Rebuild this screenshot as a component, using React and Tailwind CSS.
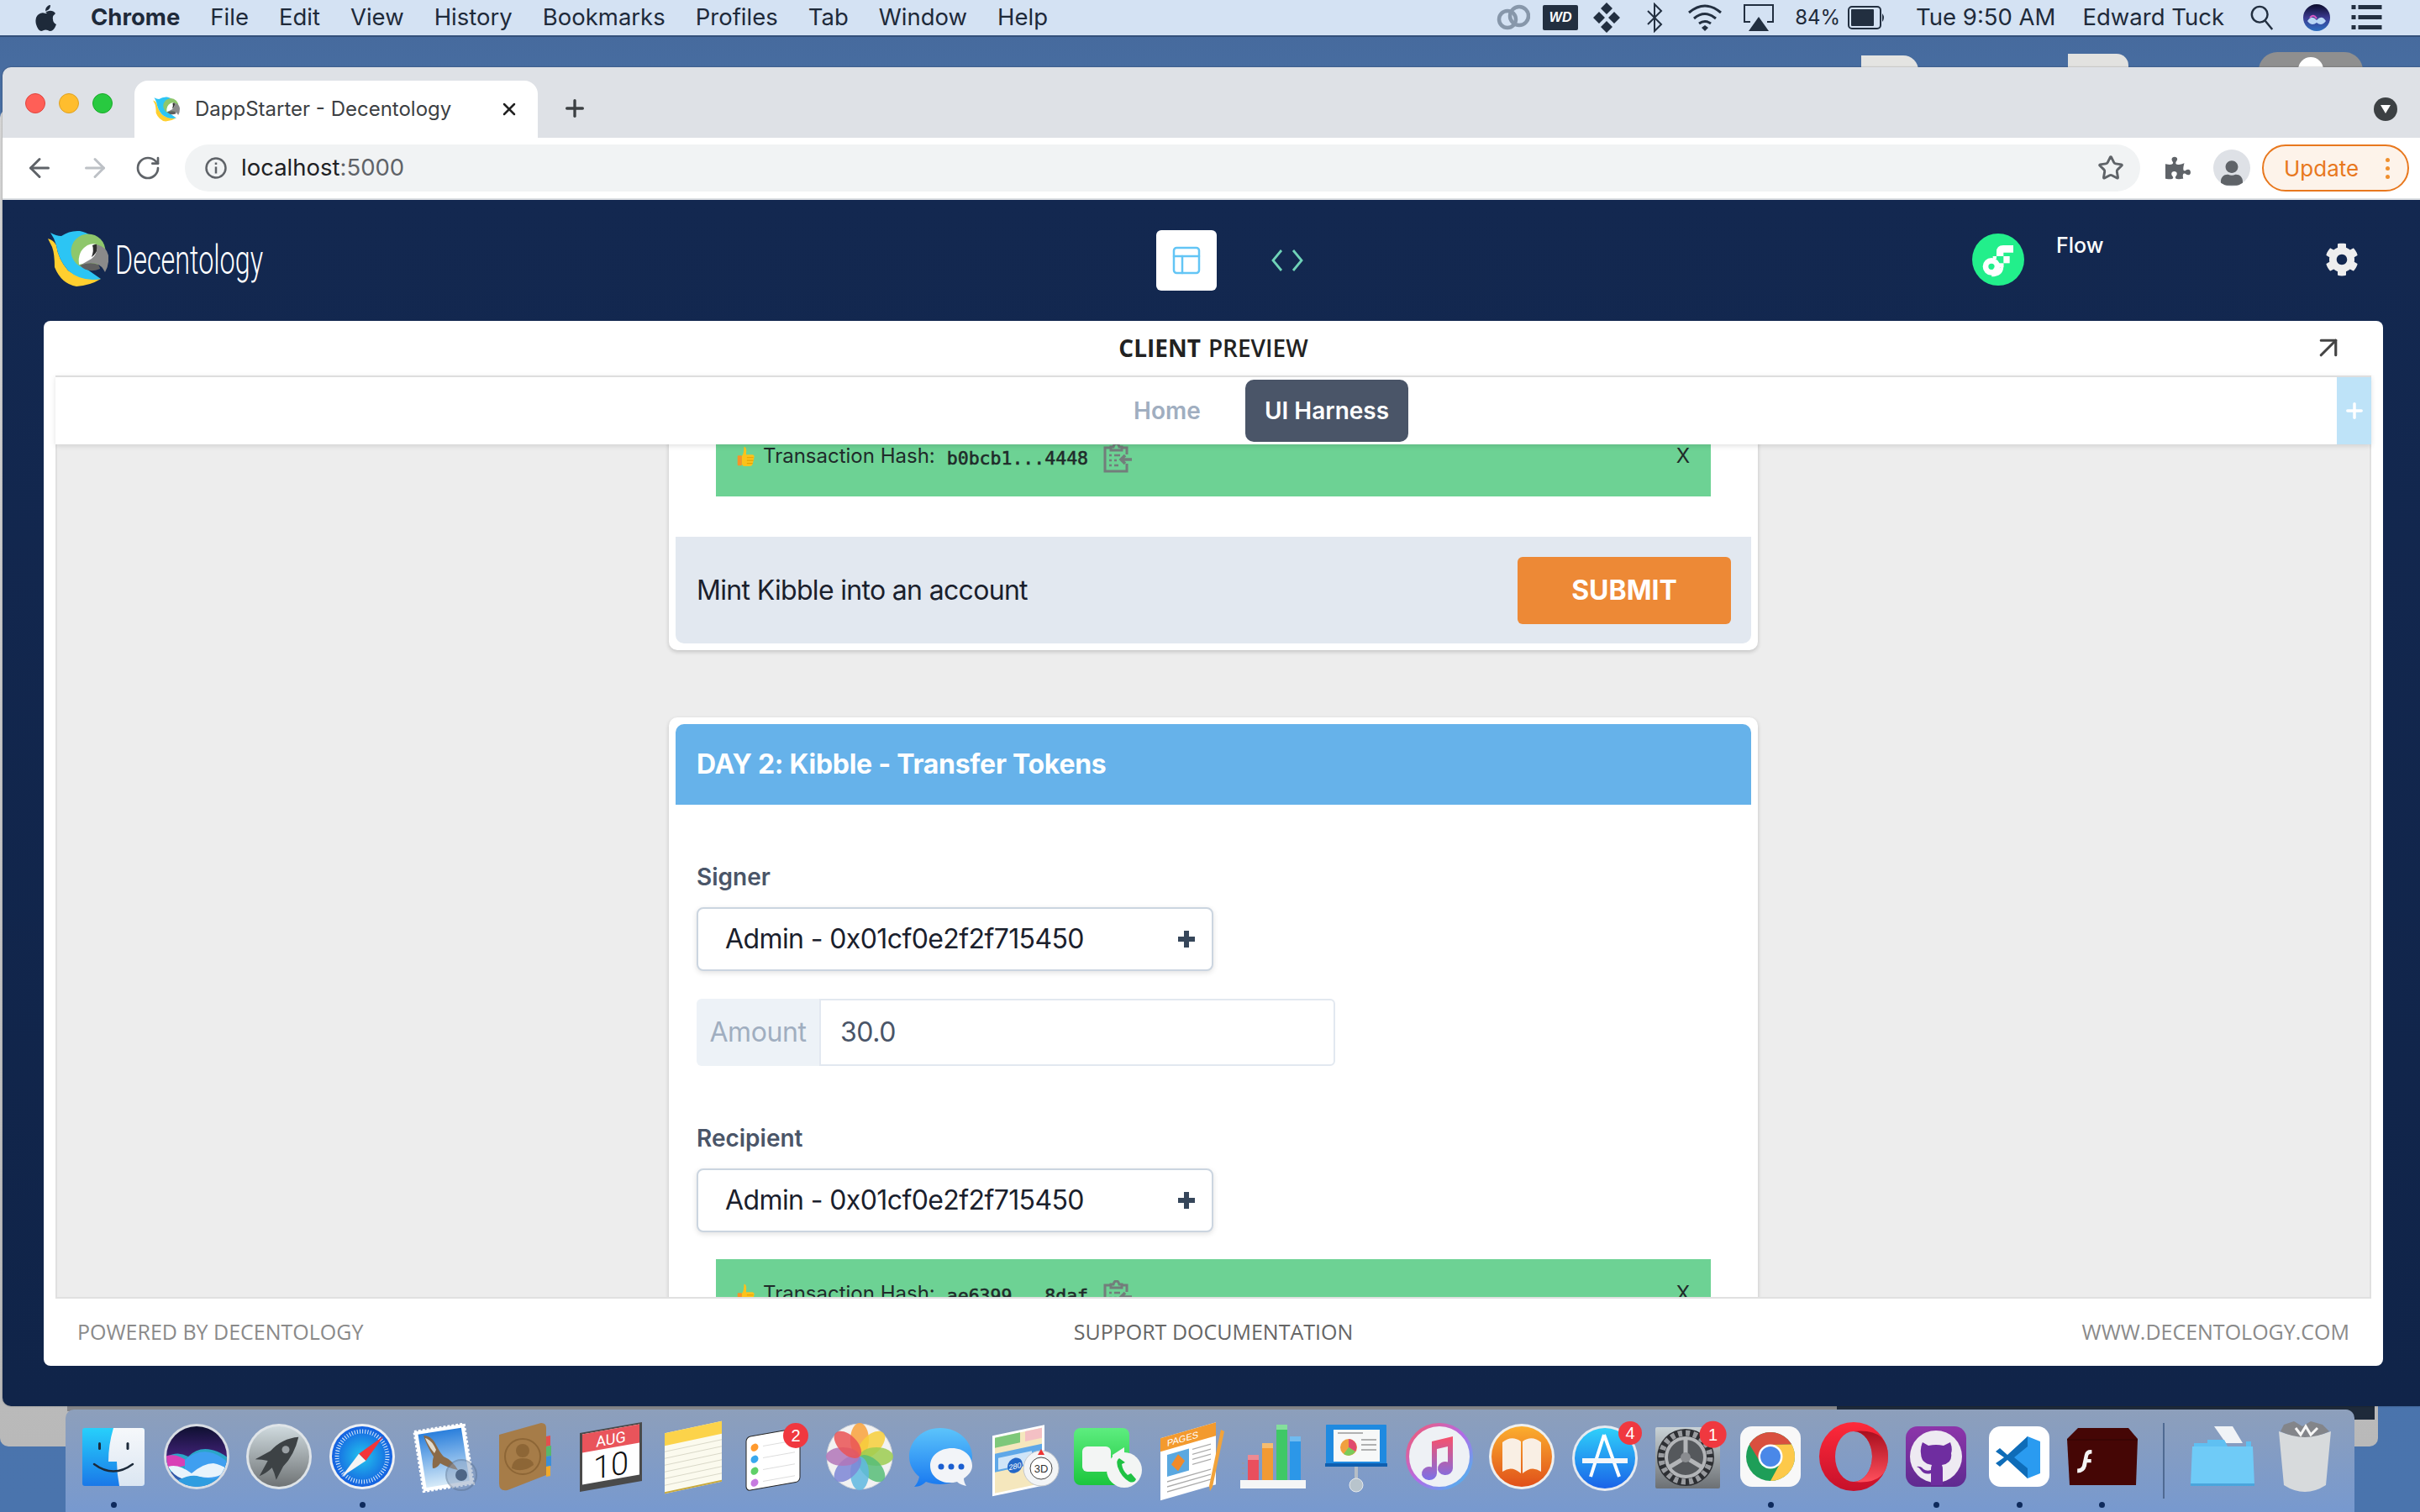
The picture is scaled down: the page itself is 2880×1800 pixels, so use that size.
import React from "react";
import { ArrowLeft, ArrowRight, RotateCw, Star, PanelsTopLeft, ArrowUpRight, Plus, X } from "lucide-react";
import { FaCog, FaPuzzlePiece, FaUser } from "react-icons/fa";

const Parrot = ({ className }) => (
  <svg viewBox="0 0 72 68" className={className}>
    <path d="M0 10 Q7 12 10 18 Q12 34 24 48 Q40 60 63 58 Q50 66 34 67 Q16 64 8 44 Q8 28 5 20 Z" fill="#ffcf2f" />
    <path d="M3 3 Q10 7 16 7 Q26 0 38 1 Q54 4 60 20 L40 42 L63 58 Q40 62 24 48 Q12 34 10 18 Q8 10 3 3 Z" fill="#2cc5f4" />
    <circle cx="48" cy="25" r="20.500" fill="#8ec76b" />
    <path d="M37 41 Q35 25 47 18 Q53 15 58 17 L62 30 L52 38 Z" fill="#fff" />
    <path d="M53 18 Q58 16 58 17 Q60 22 57 27 Q54 31 52 32 Q55 24 53 18 Z" fill="#2d2d2d" />
    <path d="M58 17 Q70 20 72 30 Q73 42 68 50 Q64 42 58 40 Q48 38 38 42 L52 34 Q60 28 58 17 Z" fill="#8a8a8a" />
    <path d="M38 42 Q50 37 60 41 Q62 44 62 46 Q48 52 38 42 Z" fill="#5f5f5f" />
  </svg>
);

const Menu = ({ children, bold }) => <span className={bold ? "font-bold" : ""}>{children}</span>;

const MenuIcons = {
  cc: (
    <svg viewBox="0 0 40 32" className="w-[40px] h-[32px]" fill="none" stroke="#8797aa" strokeWidth="4.500">
      <circle cx="13" cy="18" r="10" />
      <circle cx="27" cy="14" r="11" />
    </svg>
  ),
  wd: (
    <div className="w-[42px] h-[30px] rounded-[2px] bg-[#222f40] text-white text-[16px] font-black italic flex items-center justify-center font-['Liberation_Sans',sans-serif]">WD</div>
  ),
  drop: (
    <svg viewBox="0 0 32 36" className="w-[32px] h-[36px]" fill="#222f40">
      <path d="M16 0l7 7-7 7-7-7zM7 11l7 7-7 7-7-7zM25 11l7 7-7 7-7-7zM16 22l7 7-7 7-7-7z" />
    </svg>
  ),
  bt: (
    <svg viewBox="0 0 20 36" className="w-[20px] h-[36px]" fill="none" stroke="#222f40" strokeWidth="2">
      <path d="M2 10l16 16-8 8V2l8 8L2 26" />
    </svg>
  ),
  wifi: (
    <svg viewBox="0 0 42 34" className="w-[42px] h-[34px]" fill="none" stroke="#222f40" strokeWidth="3">
      <path d="M2 11Q21-5 40 11M8 18Q21 7 34 18M14 24Q21 19 28 24" />
      <path d="M17 29l4-3 4 3-4 4z" fill="#222f40" stroke="none" />
    </svg>
  ),
  air: (
    <svg viewBox="0 0 38 34" className="w-[38px] h-[34px]" fill="none" stroke="#222f40" strokeWidth="2">
      <path d="M9 22H2V2h34v20h-7" />
      <path d="M19 16l12 17H7z" fill="#222f40" stroke="none" />
    </svg>
  ),
  batt: (
    <svg viewBox="0 0 46 28" className="w-[46px] h-[28px]">
      <rect x="1" y="1" width="38" height="26" rx="4" fill="none" stroke="#222f40" strokeWidth="2" />
      <rect x="4" y="4" width="27" height="20" rx="1" fill="#222f40" />
      <path d="M41 9q4 5 0 10z" fill="#222f40" />
    </svg>
  ),
  search: (
    <svg viewBox="0 0 32 36" className="w-[30px] h-[36px]" fill="none" stroke="#222f40" strokeWidth="2.600">
      <circle cx="13" cy="14" r="10" />
      <path d="M20 22l9 11" />
    </svg>
  ),
  siri: (
    <svg viewBox="0 0 32 32" className="w-[32px] h-[32px]">
      <defs>
        <linearGradient id="ms" x1="0" y1="0" x2="0" y2="1">
          <stop offset="0" stopColor="#0a0a2a" />
          <stop offset=".5" stopColor="#3b3a90" />
          <stop offset="1" stopColor="#2d6fc0" />
        </linearGradient>
      </defs>
      <circle cx="16" cy="16" r="16" fill="url(#ms)" />
      <path d="M5 20q5-8 11-1 6-7 11 1-5 7-11 2-6 5-11-2z" fill="#b9d6f5" />
      <path d="M8 16q4-5 8 1" stroke="#d85ac4" strokeWidth="2" fill="none" />
    </svg>
  ),
  list: (
    <svg viewBox="0 0 36 32" className="w-[37px] h-[32px]" fill="#222f40">
      <path d="M0 1h5v5H0zM8 1h28v5H8zM0 13h5v5H0zM8 13h28v5H8zM0 25h5v5H0zM8 25h28v5H8z" />
    </svg>
  ),
};

const HashIcon = () => (
  <svg viewBox="0 0 34 36" className="w-[34px] h-[36px] ml-[18px] shrink-0" fill="none" stroke="#737d7b" strokeWidth="3">
    <path d="M8 6H2v28h26V25" />
    <path d="M22 6h6v8" />
    <path d="M9 9V5h3q1-4 3.500-4T19 5h3v4z" />
    <path d="M7 15h3M13 15h7M7 21h3M13 21h3M7 27h3M13 27h5" strokeWidth="2.500" />
    <path d="M34 20H21m5-5l-5 5 5 5" strokeWidth="3.500" />
  </svg>
);

const Thumb = () => (
  <svg viewBox="0 0 24 28" className="w-[22px] h-[24px] mt-[4px] shrink-0">
    <path d="M9 1q4 0 3 8l0 3h9q3 1 2 4l-2 9q-1 3-4 3H9q-3-1-3-5v-9q3-3 3-13z" fill="#fcc21b" />
    <rect x="0" y="13" width="6" height="14" rx="1" fill="#f79329" />
    <path d="M13 16h9M13 20h9M13 24h8" stroke="#e6a100" strokeWidth="1.300" />
  </svg>
);

const Hash = ({ mono }) => (
  <div className="h-[89px] mx-[48px] bg-[#6dd294] flex items-start pt-[25px] pl-[25px] pr-[24px] text-[24px] leading-[32px] text-[#1f2b2a]">
    <Thumb />
    <span className="ml-[9px]">Transaction Hash:</span>
    <span className="ml-[14px] mt-[3px] font-['DejaVu_Sans_Mono',monospace] text-[21.500px] [-webkit-text-stroke:0.6px_#1f2b2a]">{mono}</span>
    <HashIcon />
    <span className="ml-auto pr-[1px]">X</span>
  </div>
);

const SelectBox = ({ className = "" }) => (
  <div className={`w-[615px] h-[76px] rounded-[8px] bg-white border-2 border-[#cbd5e0] shadow-[0_2px_6px_rgba(0,0,0,0.12)] flex items-center pl-[32px] pr-[20px] text-[32px] tracking-[-0.6px] text-[#1a202c] ${className}`}>
    <span>Admin - 0x01cf0e2f2f715450</span>
    <svg viewBox="0 0 20 20" className="w-[20px] h-[20px] ml-auto" fill="#36465a">
      <path d="M7 0h6v7h7v6h-7v7H7v-7H0V7h7z" />
    </svg>
  </div>
);

const Label = ({ children, className = "" }) => (
  <div className={`text-[28px] leading-[40px] font-semibold text-[#4a5568] ${className}`}>{children}</div>
);

const D = ({ children }) => <svg viewBox="0 0 84 84" className="w-[84px] h-[84px] overflow-visible">{children}</svg>;

const icons = [
  // finder
  <D>
    <defs>
      <linearGradient id="f1" x1="0" y1="0" x2="0" y2="1"><stop offset="0" stopColor="#27d0fb" /><stop offset="1" stopColor="#1a78e8" /></linearGradient>
      <linearGradient id="f2" x1="0" y1="0" x2="0" y2="1"><stop offset="0" stopColor="#f6f8fb" /><stop offset="1" stopColor="#dbe6f2" /></linearGradient>
    </defs>
    <rect x="5" y="8" width="74" height="69" rx="3" fill="url(#f1)" />
    <path d="M42 8Q36 28 36 48H46Q46 62 49 77H76a3 3 0 003-3V11a3 3 0 00-3-3z" fill="url(#f2)" />
    <rect x="24" y="25" width="3" height="9" rx="1.500" fill="#1c2a3a" />
    <rect x="57.500" y="25" width="3" height="9" rx="1.500" fill="#1c2a3a" />
    <path d="M19 51Q42 68 65 51" fill="none" stroke="#1c2a3a" strokeWidth="2.500" strokeLinecap="round" />
  </D>,
  // siri
  <D>
    <defs>
      <linearGradient id="s1" x1="0" y1="0" x2="0" y2="1"><stop offset="0" stopColor="#0e1030" /><stop offset=".45" stopColor="#3a1f6e" /><stop offset="1" stopColor="#2b76c8" /></linearGradient>
      <clipPath id="s2"><circle cx="42" cy="42" r="36" /></clipPath>
    </defs>
    <circle cx="42" cy="42" r="39" fill="#d8dde4" />
    <circle cx="42" cy="42" r="36" fill="url(#s1)" />
    <g clipPath="url(#s2)">
      <path d="M4 44Q18 34 32 42Q44 30 60 34Q70 36 80 44V60H4Z" fill="#2aa6c8" />
      <path d="M4 42Q18 36 34 50Q24 56 4 56Z" fill="#d93fb6" />
      <path d="M28 46Q44 32 62 38Q72 42 80 50V70H28Z" fill="#3f9ff0" />
      <path d="M8 54Q20 50 36 62Q50 50 62 50Q72 52 80 58Q66 70 46 66Q36 74 24 68Q14 64 8 54Z" fill="#e8f4fc" />
      <path d="M20 70Q36 62 46 66Q60 72 70 66V84H20Z" fill="#2f9de0" />
    </g>
  </D>,
  // launchpad
  <D>
    <defs><linearGradient id="l1" x1="0" y1="0" x2="0" y2="1"><stop offset="0" stopColor="#cfdade" /><stop offset="1" stopColor="#6f7375" /></linearGradient></defs>
    <circle cx="42" cy="42" r="39" fill="#dfe4e8" />
    <circle cx="42" cy="42" r="36" fill="url(#l1)" />
    <path d="M65.300 18.700Q45.300 20.300 32 35.300L13.700 45.300Q22 45.300 28.700 47L18.700 65.300Q27 62 33.700 55.300Q37 62 38.700 69.700L47 53.700Q60.300 40.300 65.300 18.700Z" fill="#3d4245" />
    <circle cx="50" cy="33.700" r="4.500" fill="#9aa0a4" />
  </D>,
  // safari
  <D>
    <defs><radialGradient id="sa"><stop offset="0" stopColor="#22c4ee" /><stop offset="1" stopColor="#1560e0" /></radialGradient></defs>
    <circle cx="42" cy="42" r="39" fill="#eef0f3" />
    <circle cx="42" cy="42" r="36" fill="url(#sa)" />
    <circle cx="42" cy="42" r="30" fill="none" stroke="#fff" strokeWidth="5" strokeDasharray="1 2.140" opacity=".85" />
    <path d="M67.300 17.700L46.300 47 38 38.700z" fill="#f2353a" />
    <path d="M17.300 66.300L38 38.700 46.300 47z" fill="#f4f4f4" />
  </D>,
  // mail
  <D>
    <defs><linearGradient id="m1" x1="0" y1="0" x2="0" y2="1"><stop offset="0" stopColor="#2a7fdc" /><stop offset="1" stopColor="#d6eaf8" /></linearGradient></defs>
    <g transform="rotate(-9 42 42)">
      <rect x="10" y="7" width="60" height="72" fill="#fff" stroke="#fff" strokeWidth="3" strokeDasharray="3 2" />
      <rect x="14" y="11" width="52" height="64" fill="url(#m1)" />
    </g>
    <path d="M16 17Q26 17 32 30Q36 38 40 42Q50 46 57 58Q44 55 36 50Q32 56 27 56Q26 48 28 42Q20 30 16 17Z" fill="#8a6a48" />
    <path d="M18 20Q26 22 31 34L29 38Q22 30 18 20Z" fill="#e2dccf" />
    <circle cx="61" cy="64" r="18" fill="#8aa0bf" opacity=".5" stroke="#5f7592" strokeWidth="2" />
    <circle cx="61" cy="64" r="7" fill="#4e6686" />
  </D>,
  // contacts
  <D>
    <path d="M8 16L58 2Q64 2 64 8V64L18 82Q8 84 8 74Z" fill="#a67c48" />
    <path d="M64 18l5-1v12l-5 1z" fill="#e24f4f" /><path d="M64 30l6-1v12l-6 1z" fill="#57b86b" /><path d="M64 42l6-1v12l-6 1z" fill="#3b8fd8" /><path d="M64 54l5-1v12l-5 1z" fill="#f0a92a" />
    <circle cx="36" cy="42" r="21" fill="none" stroke="#8d6636" strokeWidth="2" />
    <circle cx="36" cy="35" r="8" fill="#8d6636" />
    <path d="M23 56Q24 44 36 44Q48 44 49 52Q36 62 23 56Z" fill="#8d6636" />
  </D>,
  // calendar
  <D>
    <g transform="skewY(-10) translate(0 8)">
      <rect x="5" y="7" width="74" height="70" fill="#4a4a4a" />
      <rect x="8" y="9" width="68" height="60" fill="#fff" />
      <rect x="8" y="9" width="68" height="22" fill="#e9545b" />
      <text x="42" y="27" textAnchor="middle" fontSize="18" fill="#fff" fontFamily="Roboto, sans-serif">AUG</text>
      <text x="42" y="65" textAnchor="middle" fontSize="38" fill="#111" fontFamily="Roboto, sans-serif" fontWeight="300">10</text>
    </g>
  </D>,
  // notes
  <D>
    <g transform="skewY(-12) translate(0 10)">
      <rect x="8" y="6" width="68" height="72" fill="#fbfaee" />
      <rect x="8" y="6" width="68" height="15" fill="#fcd34a" />
      <path d="M8 28H76M8 36H76M8 44H76M8 52H76M8 60H76M8 68H76" stroke="#d9d8c8" strokeWidth="1" />
      <rect x="8" y="76" width="68" height="2" fill="#c8a93c" />
    </g>
  </D>,
  // reminders
  <D>
    <g transform="skewY(-10) translate(0 8)">
      <rect x="6" y="12" width="64" height="64" rx="5" fill="#fff" stroke="#222" strokeWidth="1" />
      <circle cx="16" cy="26" r="4.500" fill="#ff9a2e" /><circle cx="16" cy="40" r="4.500" fill="#39a8ee" /><circle cx="16" cy="54" r="4.500" fill="#5fd068" /><circle cx="16" cy="68" r="4.500" fill="#c77ae0" />
      <path d="M26 26H64M26 40H64M26 54H64M26 68H64" stroke="#ddd" strokeWidth="1" />
    </g>
    <circle cx="65" cy="17" r="15" fill="#f0383f" />
    <text x="65" y="24" textAnchor="middle" fontSize="20" fill="#fff" fontFamily="Liberation Sans, sans-serif">2</text>
  </D>,
  // photos
  <D>
    <circle cx="42" cy="42" r="39" fill="#f2f2f2" />
    <circle cx="42" cy="42" r="39" fill="none" stroke="#cfd3d8" strokeWidth="1" />
    {[["#f9a23c",0],["#f7cf3b",45],["#9ccc50",90],["#57bd78",135],["#5fb8e0",180],["#7d86d6",225],["#b276b8",270],["#ea5455",315]].map(([c, a]) => (
      <ellipse key={a} cx="42" cy="22" rx="11" ry="20" fill={c} opacity=".85" transform={`rotate(${a} 42 42)`} />
    ))}
  </D>,
  // messages
  <D>
    <defs><linearGradient id="ms1" x1="0" y1="0" x2="0" y2="1"><stop offset="0" stopColor="#5cc4fb" /><stop offset="1" stopColor="#1878f0" /></linearGradient></defs>
    <path d="M40 8C18 8 3 24 3 42c0 10 5 18 12 24-1 5-3 9-6 12 6 0 11-3 14-6 5 2 11 3 17 3 22 0 38-15 38-33S62 8 40 8Z" fill="url(#ms1)" />
    <path d="M54 32c-15 0-26 9-26 21s11 20 22 20c4 0 7 0 10-1 3 3 7 4 11 5-2-3-3-6-3-9 6-4 10-9 10-15 0-12-10-21-24-21Z" fill="#f2f4f8" />
    <circle cx="41" cy="54" r="3.500" fill="#1c5fd0" /><circle cx="53" cy="54" r="3.500" fill="#1c5fd0" /><circle cx="65" cy="54" r="3.500" fill="#1c5fd0" />
  </D>,
  // maps
  <D>
    <g transform="skewY(-12) translate(0 12)">
      <rect x="3" y="6" width="62" height="72" fill="#fff" />
      <rect x="6" y="9" width="56" height="66" fill="#f5e7bd" />
      <rect x="6" y="9" width="30" height="12" fill="#7ec87a" /><rect x="42" y="9" width="20" height="12" fill="#f4c0c4" />
      <path d="M6 28H62V50H6z" fill="#5fa8e8" />
      <rect x="10" y="34" width="40" height="14" fill="#cfe5f8" />
      <circle cx="30" cy="47" r="9" fill="#2468c8" />
      <text x="30" y="51" textAnchor="middle" fontSize="9" fill="#fff" fontFamily="Liberation Sans, sans-serif">280</text>
    </g>
    <circle cx="61" cy="56" r="21" fill="#f2f4f6" stroke="#c4c8cc" />
    <circle cx="61" cy="56" r="13" fill="#fff" stroke="#444" strokeWidth="1" />
    <path d="M61 33l4 7h-8z" fill="#e33" />
    <text x="61" y="61" textAnchor="middle" fontSize="13" fill="#333" fontFamily="Liberation Sans, sans-serif">3D</text>
  </D>,
  // facetime
  <D>
    <defs><linearGradient id="ft" x1="0" y1="0" x2="0" y2="1"><stop offset="0" stopColor="#5ded7f" /><stop offset="1" stopColor="#1cc63d" /></linearGradient></defs>
    <rect x="2" y="8" width="66" height="68" rx="8" fill="url(#ft)" />
    <rect x="12" y="30" width="34" height="30" rx="6" fill="#f3f5f4" />
    <path d="M48 40l14-9v28l-14-9z" fill="#f3f5f4" />
    <circle cx="62" cy="58" r="21" fill="#f3f5f4" />
    <path d="M56 44q-4 2-2 10 4 12 14 18 6 2 8-3l-6-7-4 2q-6-5-7-13l4-2z" fill="#20c244" />
  </D>,
  // pages
  <D>
    <g transform="skewY(-16) translate(0 14)">
      <rect x="6" y="8" width="66" height="74" fill="#fff" />
      <rect x="6" y="8" width="66" height="16" fill="#f39a2e" />
      <text x="14" y="20" fontSize="11" fill="#fff" fontFamily="Liberation Sans, sans-serif">PAGES</text>
      <rect x="14" y="30" width="26" height="26" fill="#5aa8e0" />
      <path d="M27 33l8 10-8 10-8-10z" fill="#f08a2a" />
      <path d="M44 32H66M44 38H66M44 44H66M44 50H66M14 62H66M14 68H66M14 74H66" stroke="#aaa" strokeWidth="1.300" />
    </g>
    <path d="M78 10l4 2-14 66-3 5-1-6z" fill="#f2a33a" />
  </D>,
  // numbers
  <D>
    <path d="M2 70H80V80H2z" fill="#f5f6f6" />
    <path d="M4 50h3M4 56h3M4 62h3" stroke="#999" />
    <rect x="11" y="44" width="13" height="26" fill="#ea4f5d" /><rect x="11" y="40" width="13" height="6" fill="#ee8a92" />
    <rect x="28" y="30" width="13" height="40" fill="#f29a33" /><rect x="28" y="26" width="13" height="6" fill="#f6bd6f" />
    <rect x="45" y="8" width="13" height="62" fill="#3fc866" /><rect x="45" y="4" width="13" height="6" fill="#84df9c" />
    <rect x="61" y="22" width="13" height="48" fill="#2c97e8" /><rect x="61" y="18" width="13" height="6" fill="#70bbf0" />
  </D>,
  // keynote
  <D>
    <rect x="6" y="4" width="72" height="48" rx="1" fill="#1f8ae0" />
    <rect x="15" y="10" width="55" height="38" fill="#f7f8f8" />
    <circle cx="33" cy="31" r="10" fill="#f0a040" /><path d="M33 31V21a10 10 0 018 15z" fill="#e04a6e" /><path d="M33 31l8 5a10 10 0 01-14 3z" fill="#7acb5a" />
    <path d="M48 22H66M48 28H66M48 34H66M20 14H50" stroke="#999" strokeWidth="1.300" />
    <rect x="5" y="50" width="74" height="4" fill="#0f5fb0" />
    <rect x="40" y="54" width="4" height="22" fill="#b6bec6" />
    <circle cx="42" cy="76" r="8" fill="#b8c4cc" stroke="#e6e9ec" />
  </D>,
  // itunes
  <D>
    <defs><linearGradient id="it" x1="0" y1="0" x2="1" y2="1"><stop offset="0" stopColor="#f75a6a" /><stop offset=".5" stopColor="#b36ae8" /><stop offset="1" stopColor="#3dc0f0" /></linearGradient>
      <linearGradient id="it2" x1="0" y1="0" x2="0" y2="1"><stop offset="0" stopColor="#f9506a" /><stop offset="1" stopColor="#7a70e8" /></linearGradient></defs>
    <circle cx="42" cy="42" r="38" fill="#eef1f5" stroke="url(#it)" strokeWidth="4" />
    <path d="M33 24L58 18V56a9 8 0 11-6-7.500V30L39 33V62a9 8 0 11-6-7.500Z" fill="url(#it2)" />
  </D>,
  // ibooks
  <D>
    <defs><linearGradient id="ib" x1="0" y1="0" x2="0" y2="1"><stop offset="0" stopColor="#fbae2e" /><stop offset="1" stopColor="#e0501a" /></linearGradient></defs>
    <circle cx="42" cy="42" r="39" fill="#eef0f0" />
    <circle cx="42" cy="42" r="36" fill="url(#ib)" />
    <path d="M41 24Q30 16 19 25V60Q30 52 41 62ZM43 24Q54 16 65 25V60Q54 52 43 62Z" fill="#f9efe4" />
  </D>,
  // appstore
  <D>
    <defs><linearGradient id="as" x1="0" y1="0" x2="0" y2="1"><stop offset="0" stopColor="#2fd0fa" /><stop offset="1" stopColor="#1a63e8" /></linearGradient></defs>
    <circle cx="42" cy="44" r="39" fill="#e6eaf0" />
    <circle cx="42" cy="44" r="36" fill="url(#as)" />
    <path d="M41 16L25 66M41 16L59 66" stroke="#fff" strokeWidth="4" fill="none" />
    <rect x="15" y="44" width="54" height="6" fill="#f3f6fa" />
    <circle cx="72" cy="14" r="14" fill="#f0383f" />
    <text x="72" y="21" textAnchor="middle" fontSize="20" fill="#fff" fontFamily="Liberation Sans, sans-serif">4</text>
  </D>,
  // sysprefs
  <D>
    <defs><linearGradient id="sp" x1="0" y1="0" x2="0" y2="1"><stop offset="0" stopColor="#c9d2d6" /><stop offset="1" stopColor="#6c7074" /></linearGradient></defs>
    <rect x="3" y="7" width="77" height="73" rx="2" fill="url(#sp)" />
    <circle cx="39" cy="43" r="34" fill="#2d2f33" />
    <circle cx="39" cy="43" r="29" fill="none" stroke="#9a9ca0" strokeWidth="7" strokeDasharray="5 4.100" />
    <circle cx="39" cy="43" r="23" fill="#55585c" stroke="#b3b5b8" strokeWidth="4" />
    <path d="M39 43V20M39 43L19 55M39 43L59 55" stroke="#b3b5b8" strokeWidth="5" />
    <circle cx="39" cy="43" r="6" fill="#8a8c90" />
    <circle cx="71.600" cy="15.700" r="16" fill="#f0383f" />
    <text x="71.600" y="23" textAnchor="middle" fontSize="20" fill="#fff" fontFamily="Liberation Sans, sans-serif">1</text>
  </D>,
  // chrome
  <D>
    <rect x="6" y="6" width="72" height="72" rx="14" fill="#f8f8f8" />
    <circle cx="42" cy="42" r="29" fill="#1e9e58" />
    <path d="M67.100 27.500A29 29 0 0016.900 27.500L30 49 42 42 42 28Z" fill="#d9503f" />
    <path d="M67.100 27.500A29 29 0 0142 71L54 49 42 28Z" fill="#fdc94a" />
    <circle cx="42" cy="42" r="14.500" fill="#fff" />
    <circle cx="42" cy="42" r="12" fill="#4a88e8" />
  </D>,
  // opera
  <D>
    <defs>
      <linearGradient id="op" x1="0" y1="0" x2="0" y2="1"><stop offset="0" stopColor="#ff2a3a" /><stop offset="1" stopColor="#c6102a" /></linearGradient>
      <linearGradient id="op2" x1="0" y1="0" x2="0" y2="1"><stop offset="0" stopColor="#a80f1e" /><stop offset="1" stopColor="#ff4f5c" /></linearGradient>
    </defs>
    <path fillRule="evenodd" d="M42 1a41 41 0 100 82 41 41 0 000-82ZM42 12a22 30 0 110 60 22 30 0 010-60Z" fill="url(#op)" />
    <path d="M42 12A22 30 0 0164 42A22 30 0 0142 72Q83 76 83 42Q83 8 42 12Z" fill="url(#op2)" />
  </D>,
  // github
  <D>
    <defs><linearGradient id="gh" x1="0" y1="0" x2="0" y2="1"><stop offset="0" stopColor="#8d35aa" /><stop offset="1" stopColor="#5f2b90" /></linearGradient></defs>
    <rect x="6" y="6" width="72" height="72" rx="14" fill="url(#gh)" />
    <circle cx="42" cy="42" r="31" fill="#eeeaf2" />
    <path d="M26 25L33 29Q42 27 51 29L59 25Q62 33 60 38Q62 50 49 52Q50 54 50 58V76H36V62Q28 64 24 58Q22 55 19 54Q24 53 27 57Q31 60 36 58Q36 54 37 52Q24 50 24 38Q23 32 26 25Z" fill="#6f2da0" />
  </D>,
  // vscode
  <D>
    <rect x="6" y="6" width="72" height="72" rx="14" fill="#fff" />
    <path d="M52 18L67 24V62L52 68 30 43Z" fill="#2a9bf0" />
    <path d="M52 18L28 40 19 32 14 36 24 43 14 50 19 54 28 46 52 68V56L36 43 52 30Z" fill="#0e6cb8" />
  </D>,
  // flash
  <D>
    <path d="M13 8H73L84 21 82 76H3L0 21Z" fill="#450605" />
    <path d="M0 21H84V23H0Z" fill="#3a0504" />
    <path d="M52 28q-10-1-12 8l-4 18q-2 5-8 5v7q12 0 15-11l1-6h7v-6h-6l1-5q1-4 6-4z" fill="#f4f4f4" transform="translate(-8 14) scale(.72)" />
  </D>,
];

const dots = { 0: 1, 3: 1, 20: 1, 22: 1, 23: 1, 24: 1 };

export default function App() {
  return (
    <div className="relative w-[2880px] h-[1800px] overflow-hidden bg-[linear-gradient(180deg,#45689a_0%,#4a72a8_10%,#4a74ad_100%)] font-['Inter',sans-serif]">
      {/* desktop items peeking out */}
      <div className="absolute left-[2215px] top-[66px] w-[68px] h-[20px] bg-[#e4e4e2] rounded-tr-[18px]" />
      <div className="absolute left-[2461px] top-[64px] w-[72px] h-[20px] bg-[#e2e2e0] rounded-tr-[14px]" />
      <div className="absolute left-[2688px] top-[62px] w-[124px] h-[22px] bg-[#8f8f8f] rounded-t-[40px] flex justify-center"><div className="w-[30px] h-[16px] mt-[6px] bg-white rounded-t-full" /></div>
      <div className="absolute left-0 top-[130px] w-[2830px] h-[1592px] rounded-[10px] bg-[linear-gradient(180deg,#d5d5d5,#b9b9b9)]" />
      <div className="absolute left-[80px] top-[1674px] w-[2106px] h-[6px] bg-[#85868a]" />
      <div className="absolute left-[2186px] top-[1674px] w-[640px] h-[16px] bg-[#1e2a3a]" />

      <div className="relative flex flex-col h-full">
        {/* Menu bar */}
        <div className="h-[44px] shrink-0 bg-[#d4e2f3] border-b-2 border-[#33507a] flex items-center text-[27.500px] text-[#1e2a3a]">
          <svg viewBox="0 0 26 32" className="ml-[42px] w-[26px] h-[32px]" fill="#1e2a3a">
            <path d="M18 1q0 4-3 6-2 1-3 1 0-4 3-6 1-1 3-1zM12 9q2 0 4-1 5-1 8 3-4 3-3 7 0 4 4 6-3 8-7 8-2 0-3-1-3-1-5 0-2 1-3 1-4-1-6-8-2-8 3-12 4-3 8-1 1 0 2 0z" />
          </svg>
          <div className="ml-[40px] flex gap-[36px]">
            <Menu bold>Chrome</Menu>
            <Menu>File</Menu>
            <Menu>Edit</Menu>
            <Menu>View</Menu>
            <Menu>History</Menu>
            <Menu>Bookmarks</Menu>
            <Menu>Profiles</Menu>
            <Menu>Tab</Menu>
            <Menu>Window</Menu>
            <Menu>Help</Menu>
          </div>
          <div className="ml-auto mr-[45px] flex items-center">
            {MenuIcons.cc}
            <div className="ml-[15px]">{MenuIcons.wd}</div>
            <div className="ml-[18px]">{MenuIcons.drop}</div>
            <div className="ml-[31px]">{MenuIcons.bt}</div>
            <div className="ml-[29px]">{MenuIcons.wifi}</div>
            <div className="ml-[24px]">{MenuIcons.air}</div>
            <span className="ml-[24px] text-[24px]">84%</span>
            <div className="ml-[9px]">{MenuIcons.batt}</div>
            <span className="ml-[35px]">Tue 9:50 AM</span>
            <span className="ml-[32px]">Edward Tuck</span>
            <div className="ml-[30px]">{MenuIcons.search}</div>
            <div className="ml-[34px]">{MenuIcons.siri}</div>
            <div className="ml-[25px]">{MenuIcons.list}</div>
          </div>
        </div>

        {/* Browser window */}
        <div className="mt-[36px] ml-[3px] h-[1594px] shrink-0 flex flex-col rounded-tl-[10px] rounded-bl-[10px] overflow-hidden shadow-[0_0_2px_rgba(0,0,0,0.4)]">
          {/* tab strip */}
          <div className="h-[84px] shrink-0 bg-[#dee1e6] flex items-end relative">
            <div className="flex gap-[16px] ml-[27px] mb-[29px]">
              <div className="w-[24px] h-[24px] rounded-full bg-[#ff5f57] border border-[#e0443e]" />
              <div className="w-[24px] h-[24px] rounded-full bg-[#ffbd2e] border border-[#dea123]" />
              <div className="w-[24px] h-[24px] rounded-full bg-[#28c940] border border-[#1aab29]" />
            </div>
            <div className="ml-[26px] w-[480px] h-[68px] bg-white rounded-t-[16px] flex items-center pl-[22px] pr-[22px] text-[24px] text-[#3c4043]">
              <Parrot className="w-[32px] h-[30px]" />
              <span className="ml-[18px]">DappStarter - Decentology</span>
              <X className="ml-auto w-[24px] h-[24px] text-[#222]" strokeWidth={2.5} />
            </div>
            <Plus className="ml-[28px] mb-[19px] w-[32px] h-[32px] text-[#3c4043]" strokeWidth={2.5} />
            <div className="ml-auto mr-[27px] mb-[20px] w-[28px] h-[28px] rounded-full bg-[#3c4043] flex items-center justify-center">
              <svg viewBox="0 0 12 10" className="w-[12px] h-[10px]" fill="#fff"><path d="M0 0h12L6 10z" /></svg>
            </div>
          </div>
          {/* toolbar */}
          <div className="h-[74px] shrink-0 bg-white border-b-2 border-[#dcdfe3] flex items-center">
            <ArrowLeft className="ml-[26px] w-[36px] h-[36px] text-[#5f6368]" strokeWidth={2} />
            <ArrowRight className="ml-[30px] w-[36px] h-[36px] text-[#bdc1c6]" strokeWidth={2} />
            <RotateCw className="ml-[29px] w-[32px] h-[32px] text-[#5f6368]" strokeWidth={2} />
            <div className="ml-[28px] w-[2327px] h-[56px] rounded-full bg-[#f1f3f4] flex items-center pl-[23px] pr-[19px]">
              <svg viewBox="0 0 28 28" className="w-[28px] h-[28px]" fill="none" stroke="#5f6368" strokeWidth="2.500">
                <circle cx="14" cy="14" r="11.500" />
                <path d="M14 12.500v8M14 7.500v2.500" />
              </svg>
              <span className="ml-[16px] text-[27.500px] text-[#202124]">localhost<span className="text-[#5f6368]">:5000</span></span>
              <Star className="ml-auto w-[32px] h-[32px] text-[#5f6368]" strokeWidth={2.2} />
            </div>
            <FaPuzzlePiece className="ml-[30px] w-[30px] h-[30px] text-[#5f6368]" />
            <div className="ml-[27px] w-[44px] h-[44px] rounded-full bg-[#dee1e6] flex items-end justify-center overflow-hidden">
              <FaUser className="w-[26px] h-[32px] text-[#5f6368]" />
            </div>
            <div className="ml-[14px] w-[175px] h-[56px] rounded-full border-2 border-[#e8781e] bg-[#fdf3ea] flex items-center pl-[24px] text-[#e8781e] text-[26px]">
              Update
              <div className="ml-[32px] flex flex-col gap-[5px]">
                <div className="w-[5px] h-[5px] rounded-full bg-[#ef8f2e]" />
                <div className="w-[5px] h-[5px] rounded-full bg-[#ef8f2e]" />
                <div className="w-[5px] h-[5px] rounded-full bg-[#ef8f2e]" />
              </div>
            </div>
          </div>

          {/* App */}
          <div className="flex-1 min-h-0 flex flex-col bg-[linear-gradient(180deg,#132850,#102449)]">
            <div className="h-[144px] shrink-0 flex items-center relative">
              <Parrot className="ml-[54px] w-[72px] h-[68px] mt-[-4px]" />
              <span className="ml-[8px] mt-[-2px] text-[49px] leading-none font-light text-white font-['Roboto',sans-serif] scale-x-[0.66] origin-left">Decentology</span>
              <div className="absolute left-[1373px] top-[36px] w-[72px] h-[72px] rounded-[6px] bg-white flex items-center justify-center">
                <PanelsTopLeft className="w-[40px] h-[40px] text-[#63c5f5]" strokeWidth={1.500} />
              </div>
              <svg viewBox="0 0 38 26" className="absolute left-[1510px] top-[59px] w-[38px] h-[26px]" fill="none" stroke="#6fd3b8" strokeWidth="2.800">
                <path d="M12 1L2 13l10 12M26 1l10 12-10 12" />
              </svg>
              <svg viewBox="21 24 186 186" className="absolute left-[2344px] top-[40px] w-[62px] h-[62px]">
                <circle cx="114" cy="117" r="93" fill="#22ef8b" />
                <path d="M168 66H132Q108 66 108 90V105H133V92H168Z" fill="#fff" />
                <rect x="133" y="105" width="22" height="25" fill="#fff" />
                <circle cx="90" cy="142" r="21" fill="none" stroke="#fff" strokeWidth="20" />
                <rect x="108" y="130" width="25" height="14" fill="#fff" />
                <path d="M100 142Q100 178 133 130V144Q130 178 90 178Z" fill="#fff" />
                <rect x="95" y="105" width="13" height="10" fill="#fff" />
              </svg>
              <span className="absolute left-[2444px] top-[34px] text-[25px] leading-[40px] font-medium text-white">Flow</span>
              <FaCog className="absolute left-[2764px] top-[51px] w-[40px] h-[40px] text-[#eeeeee]" />
            </div>

            {/* Client preview panel */}
            <div className="ml-[49px] w-[2784px] h-[1244px] shrink-0 rounded-[8px] bg-white flex flex-col overflow-hidden">
              <div className="h-[63px] mb-[2px] shrink-0 flex items-center justify-center relative font-['Open_Sans',sans-serif] text-[28px] text-[#222]">
                <span className="font-bold">CLIENT</span>
                <span className="ml-[9px] font-semibold">PREVIEW</span>
                <ArrowUpRight className="absolute left-[2698px] top-[11px] w-[42px] h-[42px] text-[#444]" strokeWidth={1.800} />
              </div>
              <div className="mx-[14px] h-[82px] shrink-0 border-t-2 border-[#dedede] bg-white relative z-10 shadow-[0_2px_6px_rgba(0,0,0,0.12)] text-[28px] font-semibold">
                <span className="absolute left-[1283px] top-[19px] text-[#a0aec0]">Home</span>
                <div className="absolute left-[1416px] top-[3px] w-[194px] h-[74px] rounded-[10px] bg-[#4a5568] text-white flex items-center justify-center">UI Harness</div>
                <div className="absolute right-0 top-0 w-[41px] h-[80px] bg-[#bee3f8] flex items-center justify-center">
                  <Plus className="w-[28px] h-[28px] text-white" strokeWidth={3} />
                </div>
              </div>
              <div className="mx-[14px] flex-1 min-h-0 overflow-hidden bg-[#ededed] border-x-2 border-[#e0e0e0]">
                <div className="mt-[-40px] mx-auto w-[1296px] flex flex-col gap-[80px]">
                  <div className="rounded-[10px] bg-white p-[8px] shadow-[0_2px_5px_rgba(0,0,0,0.18)]">
                    <div className="pt-[5px]">
                      <Hash mono="b0bcb1...4448" />
                    </div>
                    <div className="mt-[48px] h-[127px] rounded-b-[10px] bg-[#e2e8f0] flex items-center justify-between pl-[25px] pr-[24px] text-[32px] text-[#1a202c]">
                      <span className="tracking-[-0.68px]">Mint Kibble into an account</span>
                      <div className="w-[254px] h-[80px] rounded-[6px] bg-[#ed8936] text-white font-bold flex items-center justify-center">SUBMIT</div>
                    </div>
                  </div>
                  <div className="rounded-[10px] bg-white p-[8px] pb-[60px] shadow-[0_2px_5px_rgba(0,0,0,0.18)]">
                    <div className="h-[96px] rounded-t-[10px] bg-[#66b2ea] text-white text-[32px] font-bold tracking-[-0.28px] flex items-center pl-[25px]">DAY 2: Kibble - Transfer Tokens</div>
                    <div className="px-[25px] pt-[66px] flex flex-col">
                      <Label>Signer</Label>
                      <SelectBox className="mt-[16px]" />
                      <div className="mt-[33px] w-[760px] h-[80px] flex text-[32px] tracking-[-0.4px]">
                        <div className="w-[146px] rounded-l-[6px] bg-[#edf2f7] text-[#a0aec0] flex items-center justify-center">Amount</div>
                        <div className="flex-1 rounded-r-[6px] border-2 border-[#e2e8f0] bg-white text-[#4a5568] flex items-center pl-[23px]">30.0</div>
                      </div>
                      <Label className="mt-[66px]">Recipient</Label>
                      <SelectBox className="mt-[16px]" />
                    </div>
                    <div className="mt-[32px] mb-[20px]">
                      <Hash mono="ae6399...8daf" />
                    </div>
                  </div>
                </div>
              </div>
              <div className="mx-[14px] h-[2px] shrink-0 bg-[#e0e0e0]" />
              <div className="h-[80px] shrink-0 grid grid-cols-3 items-center px-[40px] text-[25px] font-['Open_Sans',sans-serif] text-[#8a8a8a]">
                <span>POWERED BY DECENTOLOGY</span>
                <span className="text-center text-[#666]">SUPPORT DOCUMENTATION</span>
                <span className="text-right">WWW.DECENTOLOGY.COM</span>
              </div>
            </div>
          </div>
        </div>

        {/* Dock */}
        <div className="mt-[4px] ml-[78px] w-[2724px] h-[122px] shrink-0 rounded-t-[10px] bg-[linear-gradient(180deg,#8d9fbb,#7799cf)] flex pl-[8px] relative">
          {icons.map((icon, i) => (
            <div key={i} className="relative w-[98.600px] shrink-0 flex justify-center pt-[14px]">
              {icon}
              {dots[i] ? <div className="absolute bottom-[5px] left-[46px] w-[7px] h-[7px] rounded-full bg-[#0e2a5c]" /> : null}
            </div>
          ))}
          <div className="w-[2px] h-[90px] mt-[16px] ml-[23px] bg-[#4f6a92]" />
          <div className="ml-[29px] mt-[14px]">
            <svg viewBox="0 0 80 84" className="w-[80px] h-[84px]">
              <path d="M30 6H52L64 26H44z" fill="#f0f3f6" />
              <path d="M22 22H42L46 30H68V24H74V38H6V26H22z" fill="#5fc0f2" />
              <path d="M4 30H76L78 76H2z" fill="#6fcbf7" />
              <rect x="2" y="74" width="76" height="3" fill="#4aa5dc" />
            </svg>
          </div>
          <div className="ml-[23px] mt-[12px]">
            <svg viewBox="0 0 70 88" className="w-[70px] h-[88px]">
              <path d="M4 14Q35 26 66 14L60 78Q35 94 10 78Z" fill="#d7dadc" />
              <path d="M10 6L22 2 32 8 42 2 56 6 64 14Q35 28 6 14Z" fill="#83858a" />
              <path d="M24 10l6 8 6-10 6 10 8-8" stroke="#f6f6f6" strokeWidth="3" fill="none" />
            </svg>
          </div>
        </div>
      </div>
    </div>
  );
}
